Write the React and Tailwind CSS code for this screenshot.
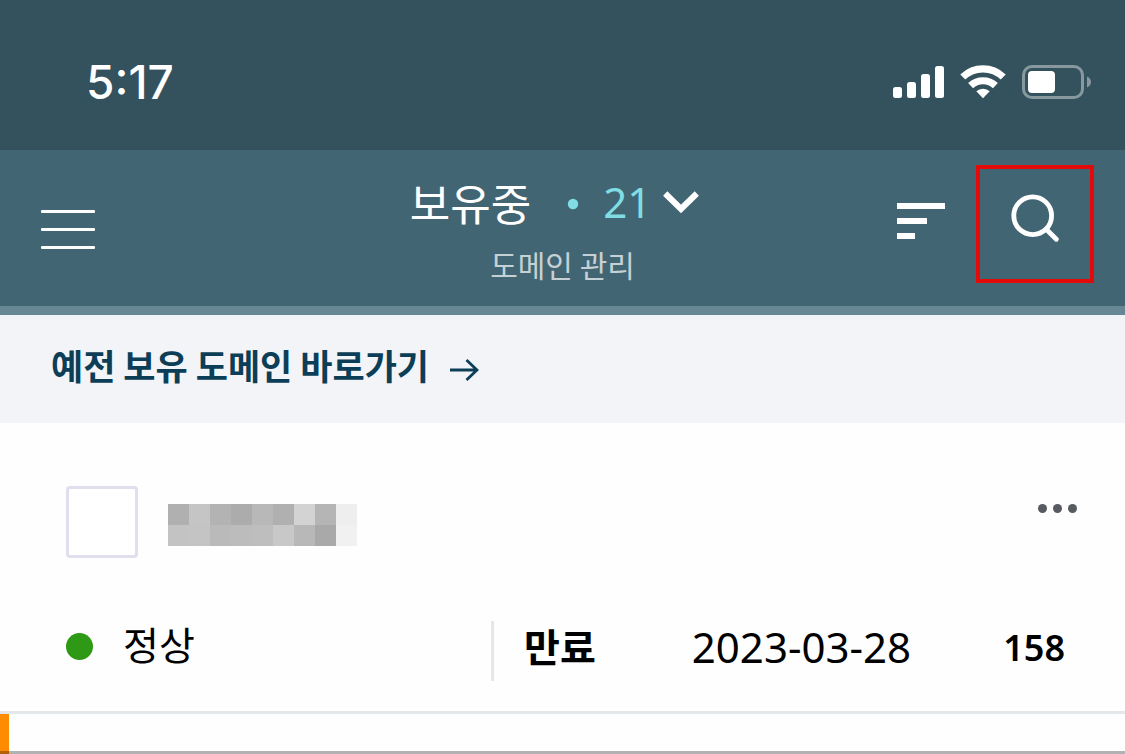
import React, { useState } from "react";

const MOSAIC = [
  ["#b0b0b0", "#c5c5c5", "#b3b3b3", "#acacac", "#b8b8b8", "#b0b0b0", "#d3d3d3", "#b5b5b5", "#eeeeee"],
  ["#c3c3c3", "#c4c4c4", "#bababa", "#bcbcbc", "#bebebe", "#c8c8c8", "#b8b8b8", "#a9a9a9", "#f1f1f1"],
];

function StatusBar() {
  return (
    <div className="flex h-[150px] items-start justify-between bg-[#34525d] pl-[86px] pr-[34px] pt-[65px] text-white">
      <span className="font-['Inter',sans-serif] text-[46px] font-medium leading-[34px]">5:17</span>
      <div className="flex items-start gap-4">
        <svg width="51" height="34" viewBox="0 0 51 34" fill="currentColor" aria-hidden="true">
          <rect x="0" y="22" width="9" height="11" rx="2.5" />
          <rect x="14" y="17" width="9" height="16" rx="2.5" />
          <rect x="28" y="9" width="9" height="24" rx="2.5" />
          <rect x="42" y="1" width="9" height="32" rx="2.5" />
        </svg>
        <svg width="46" height="34" viewBox="0 0 46 34" fill="none" aria-hidden="true">
          <path d="M2.800 12a29 29 0 0 1 40.400 0" stroke="currentColor" strokeWidth="7.200" />
          <path d="M10.600 20.700a18 18 0 0 1 24.800 0" stroke="currentColor" strokeWidth="7.200" />
          <path d="M23 33.200l-6.700-6.900a9.800 9.800 0 0 1 13.400 0z" fill="currentColor" />
        </svg>
        <svg width="69" height="34" viewBox="0 0 69 34" aria-hidden="true">
          <rect x="1.5" y="1.5" width="59" height="31" rx="8.5" fill="none" stroke="#87989f" strokeWidth="3" />
          <rect x="6" y="6" width="27" height="22" rx="4" fill="currentColor" />
          <path d="M65 11.5c2.6 1 4 3 4 5.5s-1.400 4.500-4 5.500z" fill="#87989f" />
        </svg>
      </div>
    </div>
  );
}

function Header() {
  return (
    <header className="grid grid-cols-[1fr_auto_1fr] border-b-9 border-[#678795] bg-[#426573] text-white">
      <button aria-label="메뉴" className="ml-[41px] mt-[60px] self-start justify-self-start">
        <svg width="54" height="39" viewBox="0 0 54 39" fill="currentColor">
          <rect y="0" width="54" height="3" rx="1" />
          <rect y="18" width="54" height="3" rx="1" />
          <rect y="36" width="54" height="3" rx="1" />
        </svg>
      </button>

      <div className="flex flex-col items-center pb-4 pt-6">
        <button className="mr-4 flex h-[60px] items-center">
          <span className="pb-1 text-[44px] leading-[56px]">보유중</span>
          <svg className="ml-9" width="12" height="12" viewBox="0 0 12 12" aria-hidden="true">
            <circle cx="6" cy="6" r="5.200" fill="#7fdde3" />
          </svg>
          <span className="ml-6 pb-1 font-['Noto_Sans',sans-serif] text-[42px] leading-[56px] text-[#7fdde3]">21</span>
          <svg className="mb-1 ml-3" width="36" height="24" viewBox="0 0 36 24" fill="none" aria-hidden="true">
            <path d="M2.200 3.500L18 19L33.800 3.500" stroke="currentColor" strokeWidth="6" />
          </svg>
        </button>
        <p className="pt-1 text-[30px] leading-[52px] text-[#c6d1d5]">도메인 관리</p>
      </div>

      <div className="flex items-start justify-end pr-[31px] pt-[15px]">
        <button aria-label="정렬" className="mr-[31px] mt-[38px]">
          <svg width="48" height="36" viewBox="0 0 48 36" fill="currentColor">
            <rect y="0" width="48" height="6" />
            <rect y="15" width="30" height="6" />
            <rect y="30" width="18" height="6" />
          </svg>
        </button>
        <button aria-label="검색" className="flex size-[118px] items-center justify-center border-4 border-[#e30a0a] pb-3">
          <svg width="48" height="48" viewBox="0 0 48 48" fill="none" stroke="currentColor" strokeWidth="4.800">
            <circle cx="21.700" cy="21.700" r="18.900" />
            <path d="M35.500 35.500L45.300 45.300" strokeLinecap="round" />
          </svg>
        </button>
      </div>
    </header>
  );
}

function DomainCard() {
  const [checked, setChecked] = useState(false);

  return (
    <article className="border-b-3 border-[#e4e8eb] bg-[#fefefe] pb-[30px] pt-[63px]">
      <div className="flex items-start pl-[66px] pr-12">
        <input
          type="checkbox"
          aria-label="도메인 선택"
          checked={checked}
          onChange={(e) => setChecked(e.target.checked)}
          className="size-[72px] appearance-none rounded border-3 border-[#e0dfee] bg-white checked:bg-[#426573]"
        />
        <svg className="ml-[30px] mt-[18px]" width="189" height="42" viewBox="0 0 189 42" shapeRendering="crispEdges" aria-hidden="true">
          {MOSAIC.map((row, y) =>
            row.map((color, x) => <rect key={`${x}-${y}`} x={x * 21} y={y * 21} width="21" height="21" fill={color} />)
          )}
        </svg>
        <button aria-label="더보기" className="ml-auto mt-[18px]">
          <svg width="39" height="9" viewBox="0 0 39 9" fill="#575b60">
            <circle cx="4.500" cy="4.500" r="4.500" />
            <circle cx="19.500" cy="4.500" r="4.500" />
            <circle cx="34.500" cy="4.500" r="4.500" />
          </svg>
        </button>
      </div>

      <div className="mt-[63px] flex h-[60px] items-start pl-[66px] pr-[60px] text-black">
        <div className="flex flex-11 items-start">
          <span className="mt-3 size-[27px] rounded-full bg-[#2e9914]" />
          <span className="ml-[30px] text-[39px] leading-[44px]">정상</span>
        </div>
        <div className="flex h-full flex-14 items-start border-l-3 border-[#e3e8ec] pl-[30px]">
          <span className="text-[39px] font-bold leading-[48px]">만료</span>
          <time className="ml-24 font-['Noto_Sans',sans-serif] text-[42px] leading-[52px]">2023-03-28</time>
          <span className="ml-auto font-['Noto_Sans',sans-serif] text-[36px] font-semibold leading-[54px]">158</span>
        </div>
      </div>
    </article>
  );
}

export default function App() {
  return (
    <div className="bg-[#fefefe] font-['Noto_Sans_CJK_KR',sans-serif]">
      <StatusBar />
      <Header />
      <a href="#" className="flex h-[108px] items-center bg-[#f3f4f8] pl-[51px] text-[#0c3f57]">
        <span className="pb-2 text-[35px] font-bold leading-[48px]">예전 보유 도메인 바로가기</span>
        <svg className="ml-5" width="30" height="24" viewBox="0 0 30 24" fill="none" stroke="currentColor" strokeWidth="2.800" aria-hidden="true">
          <path d="M1 13H28M17.500 3L28 13L17.500 23" />
        </svg>
      </a>
      <DomainCard />
      <div className="relative h-10 border-l-9 border-[#ff8c00]">
        <div className="absolute -left-[9px] bottom-0 right-0 h-[3px] bg-black/30" />
      </div>
    </div>
  );
}
